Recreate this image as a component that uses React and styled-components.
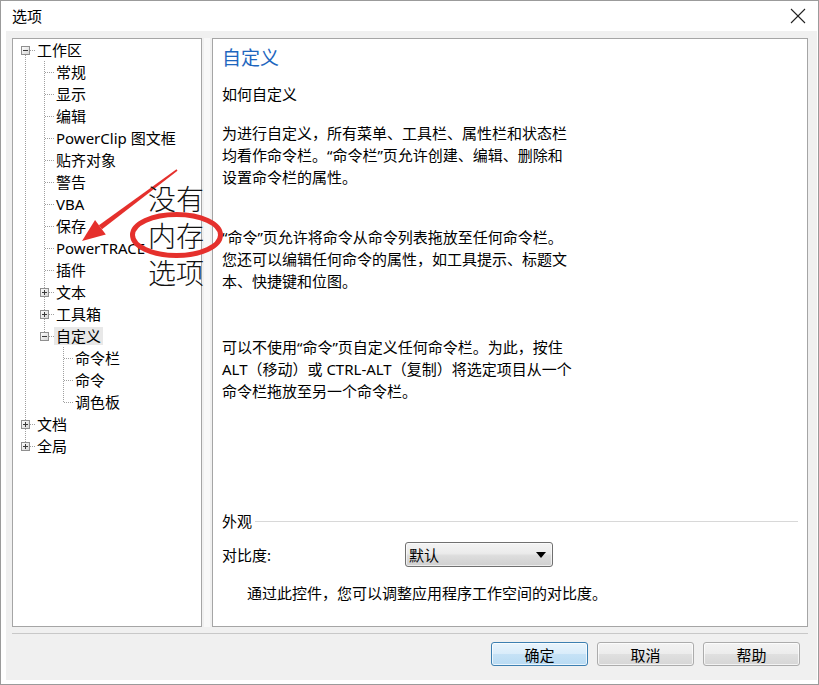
import React from 'react';
import styled, { createGlobalStyle } from 'styled-components';

const FONT = `"Noto Sans", "Noto Sans CJK SC", sans-serif`;

const Global = createGlobalStyle`
  html, body { margin: 0; padding: 0; background: #fff; }
  body { font-family: ${FONT}; }
  * { box-sizing: border-box; }
`;

const Window = styled.div`
  position: relative;
  width: 819px;
  height: 685px;
  border: 1px solid #9b9b9b;
  background: #fff;
  display: flex;
  flex-direction: column;
  font-family: ${FONT};
  font-size: 15px;
  color: #000;
  overflow: hidden;
`;

const TitleBar = styled.div`
  height: 30px;
  flex: none;
  display: flex;
  align-items: center;
  justify-content: space-between;
  padding: 0 12px 0 11px;
`;

const TitleText = styled.div`
  font-size: 15px;
  line-height: 20px;
`;

const Body = styled.div`
  flex: 1;
  margin: 0 1px 4px 5px;
  background: #f0f0f0;
  display: flex;
  flex-direction: column;
  padding: 7px 9px 0 6px;
`;

const Panels = styled.div`
  display: flex;
  height: 589px;
  flex: none;
`;

const TreePanel = styled.div`
  width: 190px;
  border: 1px solid #a5a5a5;
  background: #fff;
  padding-left: 3px;
  overflow: hidden;
`;

const Splitter = styled.div`
  width: 10px;
  background: linear-gradient(to right, #f0f0f0 0 2px, #f8f8f8 2px 8px, #f0f0f0 8px);
`;

const ContentPanel = styled.div`
  flex: 1;
  border: 1px solid #a5a5a5;
  background: #fff;
  display: flex;
  flex-direction: column;
  padding: 6px 9px 22px 9px;
`;

const Row = styled.div`
  display: flex;
  align-items: center;
  height: 22px;
`;

const GuideSvg = styled.svg`
  display: block;
  flex: none;
  width: 19px;
  height: 22px;
  shape-rendering: crispEdges;
`;

const Label = styled.span`
  display: inline-block;
  height: 18px;
  line-height: 18px;
  padding: 0 2px;
  white-space: nowrap;
  background: ${p => (p.$selected ? '#e8e8e8' : 'transparent')};
`;

const Heading = styled.div`
  font-size: 19px;
  line-height: 26px;
  color: #1e66be;
`;

const Text = styled.div`
  line-height: 22px;
  margin-top: ${p => p.$gap || 0}px;
  padding-left: ${p => p.$indent || 0}px;
  white-space: nowrap;
`;

const Bottom = styled.div`
  margin-top: auto;
  display: flex;
  flex-direction: column;
`;

const GroupHeader = styled.div`
  display: flex;
  align-items: center;
  gap: 3px;
  height: 22px;
  line-height: 22px;
`;

const GroupLine = styled.div`
  flex: 1;
  height: 1px;
  background: #d8d8d8;
`;

const FieldRow = styled.div`
  display: flex;
  align-items: center;
  height: 25px;
  margin-top: 10px;
`;

const FieldLabel = styled.div`
  width: 183px;
`;

const Select = styled.div`
  width: 148px;
  height: 25px;
  border: 1px solid #707070;
  border-radius: 3px;
  background: linear-gradient(#f3f3f3, #ebebeb 45%, #dddddd 55%, #d0d0d0);
  display: flex;
  align-items: center;
  justify-content: space-between;
  padding: 0 6px 0 3px;
  box-shadow: inset 0 0 0 1px rgba(255, 255, 255, 0.6);
`;

const Separator = styled.div`
  height: 1px;
  margin-top: 6px;
  background: #c8c8c8;
  margin-right: 0;
`;

const Footer = styled.div`
  display: flex;
  justify-content: flex-end;
  gap: 9px;
  margin-top: 8px;
  padding-right: 8px;
`;

const Button = styled.button`
  width: 97px;
  height: 24px;
  padding: 0;
  font-family: ${FONT};
  font-size: 15px;
  color: #000;
  border-radius: 3px;
  border: 1px solid ${p => (p.$primary ? '#3c7fb1' : '#acacac')};
  background: ${p =>
    p.$primary
      ? 'linear-gradient(#e9f4fc, #d9ecfa 50%, #c6e2f6 50%, #b9dbf3)'
      : 'linear-gradient(#f3f3f3, #ececec 50%, #e0e0e0 50%, #d6d6d6)'};
  box-shadow: inset 0 0 0 1px rgba(255, 255, 255, 0.7);
`;

const Overlay = styled.div`
  position: absolute;
  top: -1px;
  left: -1px;
  width: 819px;
  height: 685px;
  pointer-events: none;
`;

const OverlaySvg = styled.svg`
  position: absolute;
  left: 0;
  top: 0;
`;

const Note = styled.div`
  position: absolute;
  left: 148px;
  top: 180px;
  font-family: "Noto Sans CJK SC", sans-serif;
  font-weight: 300;
  font-size: 28px;
  line-height: 37px;
  color: #111;
`;

const DOT = '#a0a0a0';

function Guide({ kind, id }) {
  const dash = { stroke: DOT, strokeWidth: 1, strokeDasharray: '1 1' };
  if (kind === 'empty') return <GuideSvg viewBox="0 0 19 22" />;
  if (kind === 'pipe')
    return (
      <GuideSvg viewBox="0 0 19 22">
        <line x1="9.5" y1="0" x2="9.5" y2="22" {...dash} />
      </GuideSvg>
    );
  if (kind === 'tee' || kind === 'ell')
    return (
      <GuideSvg viewBox="0 0 19 22">
        <line x1="9.5" y1="0" x2="9.5" y2={kind === 'tee' ? 22 : 12} {...dash} />
        <line x1="10" y1="11.5" x2="19" y2="11.5" {...dash} />
      </GuideSvg>
    );
  const gid = `exp-${id}`;
  return (
    <GuideSvg viewBox="0 0 19 22">
      <defs>
        <linearGradient id={gid} x1="0" y1="0" x2="1" y2="1">
          <stop offset="0" stopColor="#ffffff" />
          <stop offset="1" stopColor="#d4d4d4" />
        </linearGradient>
      </defs>
      {kind.up && <line x1="9.5" y1="0" x2="9.5" y2="7" {...dash} />}
      {kind.down && <line x1="9.5" y1="16" x2="9.5" y2="22" {...dash} />}
      <line x1="14" y1="11.5" x2="19" y2="11.5" {...dash} />
      <rect x="5.5" y="7.5" width="8" height="8" fill={`url(#${gid})`} stroke="#8f8f8f" />
      <line x1="7" y1="11.5" x2="12" y2="11.5" stroke="#3a3a3a" />
      {kind.box === 'plus' && <line x1="9.5" y1="9" x2="9.5" y2="14" stroke="#3a3a3a" />}
    </GuideSvg>
  );
}

const P = 'pipe';
const T = 'tee';
const E = 'empty';
const L = 'ell';
const box = (open, up, down) => ({ box: open ? 'minus' : 'plus', up, down });

const rows = [
  { label: '工作区', cells: [box(true, false, true)] },
  { label: '常规', cells: [P, T] },
  { label: '显示', cells: [P, T] },
  { label: '编辑', cells: [P, T] },
  { label: 'PowerClip 图文框', cells: [P, T] },
  { label: '贴齐对象', cells: [P, T] },
  { label: '警告', cells: [P, T] },
  { label: 'VBA', cells: [P, T] },
  { label: '保存', cells: [P, T] },
  { label: 'PowerTRACE', cells: [P, T] },
  { label: '插件', cells: [P, T] },
  { label: '文本', cells: [P, box(false, true, true)] },
  { label: '工具箱', cells: [P, box(false, true, true)] },
  { label: '自定义', cells: [P, box(true, true, false)], selected: true },
  { label: '命令栏', cells: [P, E, T] },
  { label: '命令', cells: [P, E, T] },
  { label: '调色板', cells: [P, E, L] },
  { label: '文档', cells: [box(false, true, true)] },
  { label: '全局', cells: [box(false, true, false)] },
];

function Annotation() {
  // arrow geometry
  const tail = [177, 170];
  const tip = [82, 241];
  const dx = tip[0] - tail[0];
  const dy = tip[1] - tail[1];
  const len = Math.hypot(dx, dy);
  const u = [dx / len, dy / len];
  const n = [-u[1], u[0]];
  const headLen = 23;
  const headHalf = 9;
  const base = [tip[0] - u[0] * headLen, tip[1] - u[1] * headLen];
  const pt = (p, k, w) => `${p[0] + n[0] * w * k},${p[1] + n[1] * w * k}`;
  const shaft = [pt(tail, 1, 0.8), pt(base, 1, 2.6), pt(base, -1, 2.6), pt(tail, -1, 0.8)].join(' ');
  const head = [`${tip[0]},${tip[1]}`, pt(base, 1, headHalf), pt(base, -1, headHalf)].join(' ');
  return (
    <Overlay>
      <OverlaySvg width="819" height="685" viewBox="0 0 819 685">
        <polygon points={shaft} fill="#e5302c" />
        <polygon points={head} fill="#e5302c" />
        <ellipse cx="176.5" cy="235" rx="44" ry="20.5" fill="none" stroke="#e5302c" strokeWidth="5" />
      </OverlaySvg>
      <Note>
        <div>没有</div>
        <div>内存</div>
        <div>选项</div>
      </Note>
    </Overlay>
  );
}

export default function App() {
  return (
    <>
      <Global />
      <Window>
        <TitleBar>
          <TitleText>选项</TitleText>
          <svg width="16" height="16" viewBox="0 0 16 16">
            <line x1="1" y1="1" x2="15" y2="15" stroke="#222" strokeWidth="1.1" />
            <line x1="15" y1="1" x2="1" y2="15" stroke="#222" strokeWidth="1.1" />
          </svg>
        </TitleBar>
        <Body>
          <Panels>
            <TreePanel>
              {rows.map((r, i) => (
                <Row key={i}>
                  {r.cells.map((c, j) => (
                    <Guide key={j} kind={c} id={`${i}-${j}`} />
                  ))}
                  <Label $selected={r.selected}>{r.label}</Label>
                </Row>
              ))}
            </TreePanel>
            <Splitter />
            <ContentPanel>
              <Heading>自定义</Heading>
              <Text $gap={12}>如何自定义</Text>
              <Text $gap={17}>
                为进行自定义，所有菜单、工具栏、属性栏和状态栏
                <br />
                均看作命令栏。“命令栏”页允许创建、编辑、删除和
                <br />
                设置命令栏的属性。
              </Text>
              <Text $gap={38}>
                “命令”页允许将命令从命令列表拖放至任何命令栏。
                <br />
                您还可以编辑任何命令的属性，如工具提示、标题文
                <br />
                本、快捷键和位图。
              </Text>
              <Text $gap={44}>
                可以不使用“命令”页自定义任何命令栏。为此，按住
                <br />
                ALT（移动）或 CTRL-ALT（复制）将选定项目从一个
                <br />
                命令栏拖放至另一个命令栏。
              </Text>
              <Bottom>
                <GroupHeader>
                  <span>外观</span>
                  <GroupLine />
                </GroupHeader>
                <FieldRow>
                  <FieldLabel>对比度:</FieldLabel>
                  <Select>
                    <span>默认</span>
                    <svg width="10" height="6" viewBox="0 0 10 6">
                      <polygon points="0,0 10,0 5,6" fill="#000" />
                    </svg>
                  </Select>
                </FieldRow>
                <Text $gap={15} $indent={25}>
                  通过此控件，您可以调整应用程序工作空间的对比度。
                </Text>
              </Bottom>
            </ContentPanel>
          </Panels>
          <Separator />
          <Footer>
            <Button $primary>确定</Button>
            <Button>取消</Button>
            <Button>帮助</Button>
          </Footer>
        </Body>
        <Annotation />
      </Window>
    </>
  );
}
